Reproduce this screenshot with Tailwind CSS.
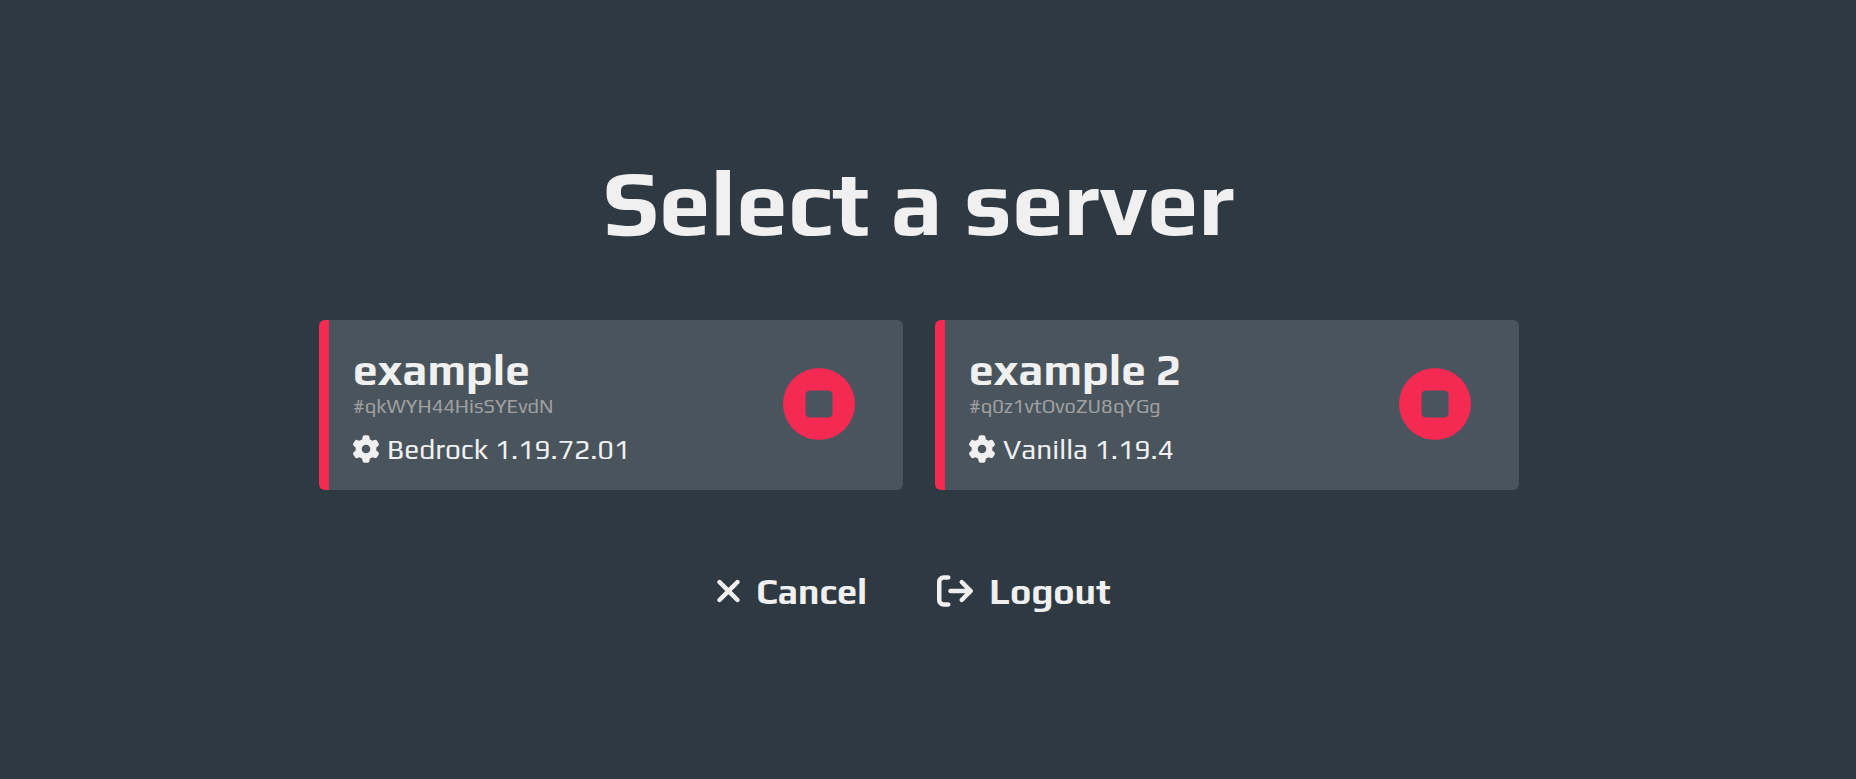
<!DOCTYPE html>
<html lang="en">
<head>
    <meta charset="UTF-8" />
    <meta name="viewport" content="width=device-width, initial-scale=1.0" />
    <title>Select a server</title>
    <script src="https://cdn.jsdelivr.net/npm/@tailwindcss/browser@4"></script>
</head>
<body class="min-h-screen flex items-center justify-center bg-[#2f3942] text-[#f0f0f0] pr-[18px] font-['Play','Noto_Sans',sans-serif]">
<main class="w-full max-w-[1200px] flex flex-col items-center pb-4">
    <h1 class="text-[92px] leading-[100px] font-bold mb-[68px]">Select a server</h1>

    <div class="w-full grid grid-cols-2 gap-8">
        <a href="#" class="flex items-center justify-between bg-[#4a545c] border-l-10 border-[#f42a53] rounded-md pl-6 pr-12 pt-6 pb-[26px]">
            <div>
                <h2 class="text-[44px] leading-[52px] font-bold">example</h2>
                <p class="text-[20px] leading-[20px] text-[#a0a0a0]">#qkWYH44HisSYEvdN</p>
                <div class="mt-[18px] flex items-center gap-2 text-[28px] leading-[30px]">
                    <svg class="w-[26px] h-7" viewBox="14 0 484 512" fill="currentColor"><path d="M495.9 166.6c3.2 8.7 .5 18.4-6.4 24.6l-43.3 39.4c1.1 8.3 1.7 16.8 1.7 25.4s-.6 17.1-1.7 25.4l43.3 39.4c6.9 6.2 9.6 15.9 6.4 24.6c-4.4 11.9-9.7 23.3-15.8 34.3l-4.7 8.1c-6.6 11-14 21.4-22.1 31.2c-5.9 7.2-15.7 9.6-24.5 6.8l-55.7-17.7c-13.4 10.3-28.2 18.9-44 25.4l-12.5 57.1c-2 9.1-9 16.3-18.2 17.8c-13.8 2.3-28 3.5-42.5 3.5s-28.7-1.2-42.5-3.5c-9.2-1.5-16.2-8.7-18.2-17.8l-12.5-57.1c-15.8-6.5-30.6-15.1-44-25.4L83.1 425.9c-8.8 2.8-18.6 .3-24.5-6.8c-8.1-9.8-15.5-20.2-22.1-31.2l-4.7-8.1c-6.1-11-11.4-22.4-15.8-34.3c-3.2-8.7-.5-18.4 6.4-24.6l43.3-39.4C64.6 273.1 64 264.6 64 256s.6-17.1 1.7-25.4L22.4 191.2c-6.9-6.2-9.6-15.9-6.4-24.6c4.4-11.9 9.7-23.3 15.8-34.3l4.7-8.1c6.6-11 14-21.4 22.1-31.2c5.9-7.2 15.7-9.6 24.5-6.8l55.7 17.7c13.4-10.3 28.2-18.9 44-25.4l12.5-57.1c2-9.1 9-16.3 18.2-17.8C227.3 1.2 241.5 0 256 0s28.7 1.2 42.5 3.5c9.2 1.5 16.2 8.7 18.2 17.8l12.5 57.1c15.8 6.5 30.6 15.1 44 25.4l55.7-17.7c8.8-2.8 18.6-.3 24.5 6.8c8.1 9.8 15.5 20.2 22.1 31.2l4.7 8.1c6.1 11 11.4 22.4 15.8 34.3zM256 336a80 80 0 1 0 0-160 80 80 0 1 0 0 160z"/></svg>
                    <span>Bedrock 1.19.72.01</span>
                </div>
            </div>
            <svg class="size-18 text-[#f42a53]" viewBox="0 0 512 512"><circle cx="256" cy="256" r="256" fill="currentColor"/><rect x="160" y="160" width="192" height="192" rx="32" fill="#4a545c"/></svg>
        </a>

        <a href="#" class="flex items-center justify-between bg-[#4a545c] border-l-10 border-[#f42a53] rounded-md pl-6 pr-12 pt-6 pb-[26px]">
            <div>
                <h2 class="text-[44px] leading-[52px] font-bold">example 2</h2>
                <p class="text-[20px] leading-[20px] text-[#a0a0a0]">#q0z1vtOvoZU8qYGg</p>
                <div class="mt-[18px] flex items-center gap-2 text-[28px] leading-[30px]">
                    <svg class="w-[26px] h-7" viewBox="14 0 484 512" fill="currentColor"><path d="M495.9 166.6c3.2 8.7 .5 18.4-6.4 24.6l-43.3 39.4c1.1 8.3 1.7 16.8 1.7 25.4s-.6 17.1-1.7 25.4l43.3 39.4c6.9 6.2 9.6 15.9 6.4 24.6c-4.4 11.9-9.7 23.3-15.8 34.3l-4.7 8.1c-6.6 11-14 21.4-22.1 31.2c-5.9 7.2-15.7 9.6-24.5 6.8l-55.7-17.7c-13.4 10.3-28.2 18.9-44 25.4l-12.5 57.1c-2 9.1-9 16.3-18.2 17.8c-13.8 2.3-28 3.5-42.5 3.5s-28.7-1.2-42.5-3.5c-9.2-1.5-16.2-8.7-18.2-17.8l-12.5-57.1c-15.8-6.5-30.6-15.1-44-25.4L83.1 425.9c-8.8 2.8-18.6 .3-24.5-6.8c-8.1-9.8-15.5-20.2-22.1-31.2l-4.7-8.1c-6.1-11-11.4-22.4-15.8-34.3c-3.2-8.7-.5-18.4 6.4-24.6l43.3-39.4C64.6 273.1 64 264.6 64 256s.6-17.1 1.7-25.4L22.4 191.2c-6.9-6.2-9.6-15.9-6.4-24.6c4.4-11.9 9.7-23.3 15.8-34.3l4.7-8.1c6.6-11 14-21.4 22.1-31.2c5.9-7.2 15.7-9.6 24.5-6.8l55.7 17.7c13.4-10.3 28.2-18.9 44-25.4l12.5-57.1c2-9.1 9-16.3 18.2-17.8C227.3 1.2 241.5 0 256 0s28.7 1.2 42.5 3.5c9.2 1.5 16.2 8.7 18.2 17.8l12.5 57.1c15.8 6.5 30.6 15.1 44 25.4l55.7-17.7c8.8-2.8 18.6-.3 24.5 6.8c8.1 9.8 15.5 20.2 22.1 31.2l4.7 8.1c6.1 11 11.4 22.4 15.8 34.3zM256 336a80 80 0 1 0 0-160 80 80 0 1 0 0 160z"/></svg>
                    <span>Vanilla 1.19.4</span>
                </div>
            </div>
            <svg class="size-18 text-[#f42a53]" viewBox="0 0 512 512"><circle cx="256" cy="256" r="256" fill="currentColor"/><rect x="160" y="160" width="192" height="192" rx="32" fill="#4a545c"/></svg>
        </a>
    </div>

    <div class="mt-20 pr-3 flex items-center gap-[70px] text-[36px] leading-[42px] font-bold">
        <button class="flex items-center gap-3.5 cursor-pointer">
            <svg class="w-[27px] h-9" viewBox="0 0 384 512" fill="currentColor"><path d="M342.6 150.6c12.5-12.5 12.5-32.8 0-45.3s-32.8-12.5-45.3 0L192 210.7 86.6 105.4c-12.5-12.5-32.8-12.5-45.3 0s-12.5 32.8 0 45.3L146.7 256 41.4 361.4c-12.5 12.5-12.5 32.8 0 45.3s32.8 12.5 45.3 0L192 301.3 297.4 406.6c12.5 12.5 32.8 12.5 45.3 0s12.5-32.8 0-45.3L237.3 256 342.6 150.6z"/></svg>
            Cancel
        </button>
        <button class="flex items-center gap-4 cursor-pointer">
            <svg class="size-9" viewBox="0 0 512 512" fill="currentColor"><path d="M502.6 278.6c12.5-12.5 12.5-32.8 0-45.3l-128-128c-12.5-12.5-32.8-12.5-45.3 0s-12.5 32.8 0 45.3L402.7 224 192 224c-17.7 0-32 14.3-32 32s14.3 32 32 32l210.7 0-73.4 73.4c-12.5 12.5-12.5 32.8 0 45.3s32.8 12.5 45.3 0l128-128zM160 96c17.7 0 32-14.3 32-32s-14.3-32-32-32L96 32C43 32 0 75 0 128L0 384c0 53 43 96 96 96l64 0c17.7 0 32-14.3 32-32s-14.3-32-32-32l-64 0c-17.7 0-32-14.3-32-32l0-256c0-17.7 14.3-32 32-32l64 0z"/></svg>
            Logout
        </button>
    </div>
</main>
</body>
</html>
